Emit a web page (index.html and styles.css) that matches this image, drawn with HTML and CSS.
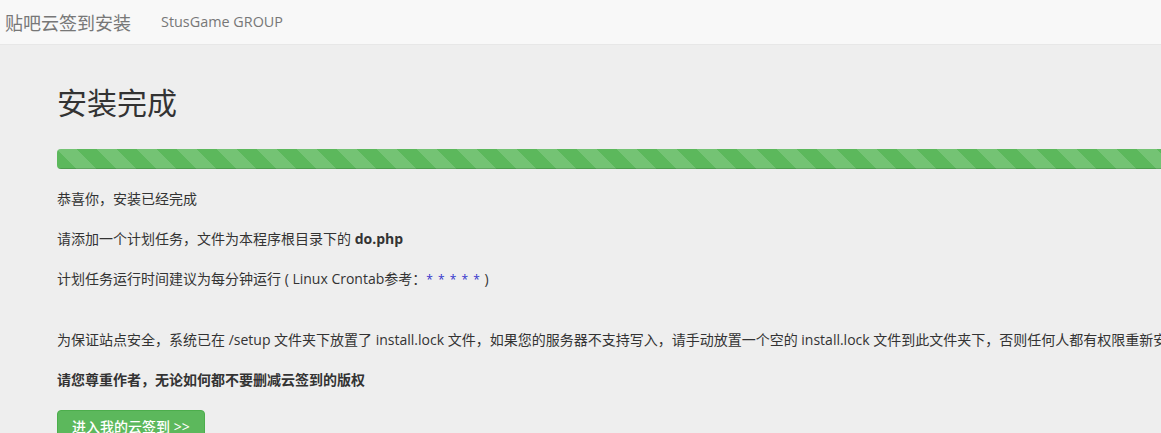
FILE: index.html
```html
<!DOCTYPE html>
<html lang="zh-CN">
<head>
    <meta charset="UTF-8">
    <meta name="viewport" content="width=device-width, initial-scale=1.0">
    <title>贴吧云签到安装</title>
    <link rel="stylesheet" href="styles.css">
</head>
<body>
<nav class="navbar">
    <a class="navbar-brand" href="#">贴吧云签到安装</a>
    <a class="navbar-link" href="#">StusGame GROUP</a>
</nav>
<div class="container">
    <h1 class="page-title">安装完成</h1>
    <div class="progress">
        <div class="progress-bar"></div>
    </div>
    <p>恭喜你，安装已经完成</p>
    <p>请添加一个计划任务，文件为本程序根目录下的 <b>do.php</b></p>
    <p>计划任务运行时间建议为每分钟运行 ( Linux Crontab参考：<span class="cron">* * * * *</span> )</p>
    <br>
    <p>为保证站点安全，系统已在 /setup 文件夹下放置了 install.lock 文件，如果您的服务器不支持写入，请手动放置一个空的 install.lock 文件到此文件夹下，否则任何人都有权限重新安装您的云签到</p>
    <p><b>请您尊重作者，无论如何都不要删减云签到的版权</b></p>
    <a class="btn-success" href="#">进入我的云签到 &gt;&gt;</a>
</div>
</body>
</html>
```

FILE: styles.css
```css
* {
    box-sizing: border-box;
}
body {
    margin: 0;
    background: #eee;
    color: #333;
    font-family: "Open Sans", "Noto Sans CJK SC", sans-serif;
    font-size: 14px;
    line-height: 20px;
    overflow: hidden;
}
a {
    text-decoration: none;
}
.navbar {
    display: flex;
    align-items: center;
    height: 45px;
    background: #f8f8f8;
    border-bottom: 1px solid #e7e7e7;
    padding-left: 5px;
}
.navbar-brand {
    color: #777;
    font-family: "Noto Sans CJK SC", sans-serif;
    font-size: 18px;
    margin-right: 30px;
}
.navbar-link {
    color: #777;
    font-size: 14.4px;
}
.container {
    width: 1400px;
    padding: 39px 0 0 57px;
}
.page-title {
    margin: 0 0 31px;
    font-family: "Noto Sans CJK SC", sans-serif;
    font-size: 30px;
    font-weight: 400;
    line-height: 34px;
}
.progress {
    height: 20px;
    margin-bottom: 20px;
    border-radius: 4px;
    overflow: hidden;
    background: #f5f5f5;
    box-shadow: inset 0 1px 2px rgba(0, 0, 0, 0.1);
}
.progress-bar {
    width: 100%;
    height: 100%;
    background-color: #5cb85c;
    background-image: linear-gradient(45deg, rgba(255, 255, 255, .15) 25%, transparent 25%, transparent 50%, rgba(255, 255, 255, .15) 50%, rgba(255, 255, 255, .15) 75%, transparent 75%, transparent);
    background-size: 40px 40px;
    box-shadow: inset 0 -1px 0 rgba(0, 0, 0, .15);
}
p {
    margin: 0 0 20px;
    white-space: nowrap;
}
br {
    display: block;
    content: "";
    height: 20px;
}
.cron {
    color: #33c;
    font-size: 12px;
    letter-spacing: 1px;
}
.btn-success {
    display: inline-block;
    padding: 6px 14px;
    font-size: 14px;
    font-weight: 500;
    line-height: 20px;
    color: #fff;
    background: #5cb85c;
    border: 1px solid #4cae4c;
    border-radius: 4px;
}
```
